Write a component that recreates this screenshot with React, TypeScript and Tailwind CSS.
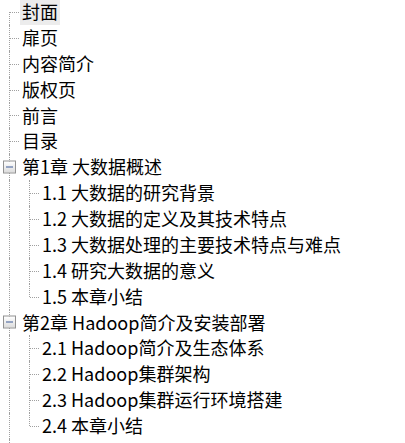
import React from 'react';

type Node = { label: string; children?: string[]; selected?: boolean };

const tree: Node[] = [
  { label: '封面', selected: true },
  { label: '扉页' },
  { label: '内容简介' },
  { label: '版权页' },
  { label: '前言' },
  { label: '目录' },
  {
    label: '第1章 大数据概述',
    children: [
      '1.1 大数据的研究背景',
      '1.2 大数据的定义及其技术特点',
      '1.3 大数据处理的主要技术特点与难点',
      '1.4 研究大数据的意义',
      '1.5 本章小结'
    ]
  },
  {
    label: '第2章 Hadoop简介及安装部署',
    children: [
      '2.1 Hadoop简介及生态体系',
      '2.2 Hadoop集群架构',
      '2.3 Hadoop集群运行环境搭建',
      '2.4 本章小结'
    ]
  }
];

// one 20px column of tree lines
const Gutter = ({
  vertical,
  branch,
  box
}: {
  vertical: 'full' | 'top' | 'bottom' | 'none';
  branch?: boolean;
  box?: boolean;
}) => {
  return (
    <div className="relative h-full w-[20px] shrink-0">
      {vertical === 'full' && (
        <span className="absolute left-[9px] top-0 h-full border-l border-dotted border-[#a0a0a0]" />
      )}
      {vertical === 'top' && (
        <span className="absolute left-[9px] top-0 h-1/2 border-l border-dotted border-[#a0a0a0]" />
      )}
      {vertical === 'bottom' && (
        <span className="absolute left-[9px] top-1/2 h-1/2 border-l border-dotted border-[#a0a0a0]" />
      )}
      {branch && (
        <span className="absolute left-[10px] top-1/2 w-[9px] border-t border-dotted border-[#a0a0a0]" />
      )}
      {box && (
        <span className="absolute left-[3px] top-1/2 flex h-[13px] w-[13px] -translate-y-1/2 items-center justify-center border border-[#919191] bg-gradient-to-b from-white to-[#dcdcdc]">
          <span className="h-px w-[7px] bg-[#3d5a98]" />
        </span>
      )}
    </div>
  );
};

const Row = ({ children, label, selected }: { children: React.ReactNode; label: string; selected?: boolean }) => (
  <div className="flex h-[25.875px] items-stretch">
    {children}
    <div className="flex items-center">
      <span
        className={`whitespace-nowrap px-[2px] leading-[25.875px] text-black ${selected ? 'bg-[#ececec]' : ''}`}
      >
        {label}
      </span>
    </div>
  </div>
);

export default function App() {
  return (
    <div
      className="-mt-px h-[444px] overflow-hidden bg-white text-[18px]"
      style={{ fontFamily: '"Microsoft YaHei", "Noto Sans CJK SC", "Noto Sans", sans-serif' }}
    >
      {tree.map((node, i) => (
        <React.Fragment key={node.label}>
          <Row label={node.label} selected={node.selected}>
            <Gutter vertical={i === 0 ? 'bottom' : 'full'} branch={!node.children} box={!!node.children} />
          </Row>
          {node.children?.map((child, j) => (
            <Row key={child} label={child}>
              <Gutter vertical="full" />
              <Gutter vertical={j === node.children!.length - 1 ? 'top' : 'full'} branch />
            </Row>
          ))}
        </React.Fragment>
      ))}
      <div className="flex h-[10px]">
        <Gutter vertical="full" />
      </div>
    </div>
  );
}
